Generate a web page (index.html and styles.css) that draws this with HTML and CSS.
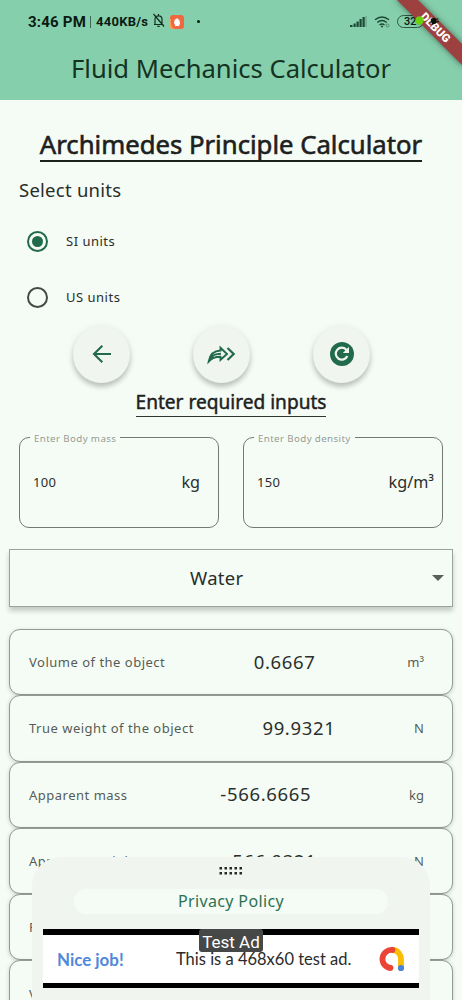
FILE: index.html
```html
<!DOCTYPE html>
<html lang="en">
<head>
<meta charset="utf-8">
<title>Fluid Mechanics Calculator</title>
<link rel="stylesheet" href="styles.css">
</head>
<body>
<div class="screen">
  <header class="appbar">
    <div class="status">
      <span class="clock">3:46 PM</span><span class="bar"></span><span class="rate">440KB/s</span>
      <svg class="bell" width="13" height="15" viewBox="0 0 13 15" fill="none" stroke="#12301f" stroke-width="1.2"><path d="M2 11.5h9.5M3 11V6.200C3 4 4.500 2.800 6.500 2.800S10 4 10 6.200V11M5.300 13.300h2.400M6.500 1v1.500M1.500 1l10.500 12.500"/></svg>
      <svg class="appicon" width="14" height="14" viewBox="0 0 14 14"><rect width="14" height="14" rx="3" fill="#ef6840"/><path d="M1 4Q0 13 5 14H3Q0 14 0 11V4Z" fill="#f7a05a"/><path d="M4 7.500 5 4l1 .5.5-1.300 1.200.2.6 1 1 .3.7 3.800-1 2.500H5.200Z" fill="#fff"/></svg>
      <span class="dot"></span>
      <svg class="signal" width="18" height="13" viewBox="0 0 18 13"><path d="M0 10h2.500v2H0zM3.500 8.500h2.200V12H3.500zM6.500 6.500h2.200V12H6.500zM9.500 4h2.200v8H9.500zM12.500 2h2.200v10h-2.200z" fill="#1c4732"/><path d="M16 1v11" stroke="#5f967b" stroke-width="1"/></svg>
      <svg class="wifi" width="17" height="14" viewBox="0 0 17 14" fill="none" stroke="#1c4732" stroke-width="1.400"><path d="M1 4.800Q8 -.8 15 4.800M3.300 7.500Q8 3.500 12.700 7.500M5.500 10Q8 8 10.500 10"/><circle cx="8" cy="11.600" r="1" fill="#1c4732" stroke="none"/><circle cx="13.500" cy="10.500" r="1.500" stroke="#4d8468" stroke-width="1"/></svg>
      <span class="battery">32</span>
    </div>
    <h1 class="apptitle">Fluid Mechanics Calculator</h1>
    <svg class="ribbon" width="80" height="80" viewBox="0 0 80 80"><path class="band" d="M13 -2 82 67V46L34 -2Z"/><text class="debug" transform="translate(53.500 27.500) rotate(45)" text-anchor="middle" y="4">DEBUG</text><circle cx="37.500" cy="20.500" r="4.200" fill="#6bd00b"/><path d="M49 18h4l1 1.500h2.500v1H54v1.500h2.500v1H54L53 24h-4v-2.300h-2v-1.300h2Z" transform="rotate(-15 52 20)" fill="#071009"/></svg>
  </header>

  <main class="content">
    <h2 class="title"><span>Archimedes Principle Calculator</span></h2>
    <p class="select">Select units</p>
    <div class="radio"><i class="ring on"></i><span>SI units</span></div>
    <div class="radio"><i class="ring"></i><span>US units</span></div>
    <div class="actions">
      <div class="fab"><svg width="24" height="24" viewBox="0 0 24 24" fill="none" stroke="#216b4c" stroke-width="2.100"><path d="M21 12H4.500M12.300 3.700 4 12l8.300 8.300"/></svg></div>
      <div class="fab"><svg width="32" height="24" viewBox="0 0 32 24" fill="none" stroke="#216b4c" stroke-width="1.900"><path d="M2.700 19.500C4 11.500 8 8.800 14.500 8.500V5.800L21 12l-6.500 5.800v-3C9 14.700 6 15.800 2.700 19.500ZM2.700 19.500C6 12.500 10 11.800 15 11.700"/><path d="m21.500 6 6.200 6-6.200 6" stroke-width="2.200"/></svg></div>
      <div class="fab"><svg width="24" height="24" viewBox="0 0 24 24"><circle cx="12" cy="12" r="12" fill="#216b4c"/><path d="M17.300 14A6 6 0 1 1 16.500 8" fill="none" stroke="#f0f5ef" stroke-width="2.200"/><path d="M19 4.800V11h-6.200Z" fill="#f0f5ef"/></svg></div>
    </div>
    <h3 class="subtitle"><span>Enter required inputs</span></h3>
    <div class="inputs">
      <div class="field"><span class="legend">Enter Body mass</span><span class="value">100</span><span class="unit">kg</span></div>
      <div class="field second"><span class="legend">Enter Body density</span><span class="value">150</span><span class="unit">kg/m³</span></div>
    </div>
    <div class="dropdown"><span>Water</span><i class="caret"></i></div>
    <div class="results">
      <div class="row"><span class="name">Volume of the object</span><span class="num">0.6667</span><span class="ru">m³</span></div>
      <div class="row"><span class="name">True weight of the object</span><span class="num">99.9321</span><span class="ru">N</span></div>
      <div class="row"><span class="name">Apparent mass</span><span class="num">-566.6665</span><span class="ru">kg</span></div>
      <div class="row"><span class="name">Apparent weight</span><span class="num">-566.9321</span><span class="ru">N</span></div>
      <div class="row"><span class="name">F</span></div>
      <div class="row"><span class="name">V</span></div>
    </div>
  </main>

  <aside class="sheet">
    <svg class="grip" width="24" height="8" viewBox="0 0 24 8" fill="#252a27"><path d="M.5 0h2.500v2.500H.5zM5.500 0H8v2.500H5.500zM10.500 0H13v2.500h-2.500zM15.500 0H18v2.500h-2.500zM20.500 0H23v2.500h-2.500zM.5 5h2.500v2.500H.5zM5.500 5H8v2.500H5.500zM10.500 5H13v2.500h-2.500zM15.500 5H18v2.500h-2.500zM20.500 5H23v2.500h-2.500z"/></svg>
    <div class="privacy"><span>Privacy Policy</span></div>
    <div class="ad">
      <span class="nice">Nice job!</span><span class="adtext">This is a 468x60 test ad.</span>
      <svg class="admob" width="26" height="26" viewBox="0 0 26 26" fill="none" stroke-width="5.800" stroke-linecap="round"><path d="M14 4A8.500 9 0 0 1 22 13V22" stroke="#fbbc04"/><path d="M13.500 4A9 9 0 1 0 11.500 22" stroke="#e94435"/><circle cx="22" cy="22" r="3.100" fill="#4b83dc" stroke="none"/></svg>
      <span class="badge"><span>Test Ad</span></span>
    </div>
  </aside>
</div>
</body>
</html>
```
FILE: styles.css
```css
* { box-sizing: border-box; }
body { margin: 0; background: #f5fcf5; font-family: "Noto Sans", sans-serif; color: #292d2a; }
h1, h2, h3, p { margin: 0; font-weight: 400; }
.screen { position: relative; width: 462px; height: 1000px; overflow: hidden; }
.appbar { position: relative; height: 100px; background: #86cfac; }
.status { display: flex; align-items: center; height: 43px; padding-left: 28px; font-family: Roboto, sans-serif; font-weight: 700; color: #0b1b12; white-space: nowrap; }
.clock { font-size: 15px; width: 58px; letter-spacing: .2px; }
.bar { width: 1px; height: 12px; margin: 0 5px 0 4px; background: #3d6953; }
.rate { font-size: 13px; width: 56px; letter-spacing: .25px; }
.bell { margin-top: -2px; flex: none; }
.appicon { margin-left: 5px; flex: none; }
.dot { width: 3px; height: 3px; border-radius: 50%; background: #0b1b12; margin-left: 13px; }
.signal { margin-left: 150px; flex: none; }
.wifi { margin-left: 6px; flex: none; }
.battery { width: 27px; height: 13px; margin-left: 6px; border: 1.500px solid #2b5842; border-radius: 7px; font-size: 11px; font-weight: 500; line-height: 11px; padding-left: 6px; }
.apptitle { text-align: center; font-size: 25.600px; line-height: 36px; margin-top: 8px; color: #143323; }
.ribbon { position: absolute; top: 0; right: 0; overflow: hidden; }
.band { fill: #9c4040; filter: drop-shadow(0 0 3px rgba(0,0,0,.5)); }
.debug { font: 900 11.500px Roboto, sans-serif; fill: #fff; }
.title { height: 70px; padding-top: 27px; text-align: center; font-size: 25.700px; line-height: 36px; white-space: nowrap; color: #1d211e; -webkit-text-stroke: .6px #1d211e; }
.title span { display: inline-block; height: 35px; border-bottom: 2px solid #1d211e; }
.select { padding: 4px 0 0 19px; height: 43px; font-size: 18.500px; line-height: 32px; letter-spacing: .25px; }
.radio { display: flex; align-items: center; height: 56.300px; padding-left: 27px; gap: 18px; font-size: 13px; letter-spacing: .5px; }
.ring { width: 21px; height: 21px; border: 2.400px solid #434a45; border-radius: 50%; padding: 3px; }
.ring.on { border-color: #216b4c; background: #216b4c content-box; }
.actions { display: flex; padding: 0 0 0 73px; gap: 63px; height: 60px; }
.fab { width: 57px; height: 57px; border-radius: 50%; background: #f0f5ef; display: flex; align-items: center; justify-content: center; box-shadow: 0 4px 5px rgba(0,0,0,.2), 0 1px 8px rgba(0,0,0,.08); flex: none; }
.subtitle { height: 51.400px; padding-top: 2px; text-align: center; font-size: 19.100px; line-height: 28px; color: #1d211e; -webkit-text-stroke: .45px #1d211e; }
.subtitle span { display: inline-block; height: 29px; border-bottom: 1.500px solid #303531; }
.inputs { display: flex; gap: 24px; padding-left: 19px; height: 112px; }
.field { position: relative; width: 200px; height: 91px; border: 1px solid #727a74; border-radius: 10px; display: flex; align-items: center; justify-content: space-between; padding: 0 18px 0 13px; flex: none; }
.field.second { padding-right: 8px; }
.legend { position: absolute; left: 10px; top: -6px; padding: 0 4px; background: #f5fcf5; color: #959c96; font-size: 9.800px; line-height: 14px; letter-spacing: .35px; white-space: nowrap; }
.value { font-size: 13px; letter-spacing: .3px; }
.unit { font-size: 16.200px; letter-spacing: 0; }
.dropdown { display: flex; align-items: center; justify-content: space-between; width: 444px; height: 58px; margin-left: 9px; padding: 0 8px 1px 180px; border: 1px solid #9aa39c; background: #f5fcf5; box-shadow: 0 4px 5px rgba(0,0,0,.2); font-size: 18.500px; letter-spacing: .3px; }
.caret { margin-top: 2px; border: 6px solid transparent; border-top-color: #59605b; border-bottom: 0; }
.results { margin: 22px 0 0 9px; width: 444px; }
.row { display: flex; justify-content: space-between; align-items: center; height: 66.300px; padding: 0 28px 0 19px; border: 1px solid #929b94; border-radius: 11px; background: #f5fcf5; box-shadow: 0 1px 4px rgba(0,0,0,.18); color: #555c57; }
.name, .ru { font-size: 13px; letter-spacing: .5px; white-space: nowrap; }
.ru { min-width: 20px; text-align: right; letter-spacing: 0; }
.num { font-size: 18.500px; letter-spacing: .65px; color: #2b302c; margin-bottom: 2px; }
.sheet { position: absolute; left: 32px; top: 857px; width: 398px; height: 150px; border-radius: 29px 29px 0 0; background: #f0f5ef; }
.grip { display: block; margin: 10px auto 0; }
.privacy { width: 314px; height: 25px; margin: 14px 0 15px 42px; border-radius: 12px; background: #f5fcf5; text-align: center; color: #2c7152; font-size: 16px; line-height: 25px; letter-spacing: .35px; }
.ad { position: relative; display: flex; align-items: center; width: 376px; height: 59px; margin-left: 11px; padding: 0 14px; background: #fff; border: solid #000; border-width: 6px 0 5px; font-family: Lato, sans-serif; white-space: nowrap; }
.nice { width: 119px; font-size: 16.900px; font-weight: 700; color: #5088dc; }
.adtext { font-size: 16.500px; color: #2b2b2b; }
.admob { margin-left: auto; }
.badge { position: absolute; left: 156px; top: -6px; width: 64px; height: 23px; background: #464847; border-radius: 3px; color: #fff; font: 17px/26px Roboto, sans-serif; text-align: center; }
```
